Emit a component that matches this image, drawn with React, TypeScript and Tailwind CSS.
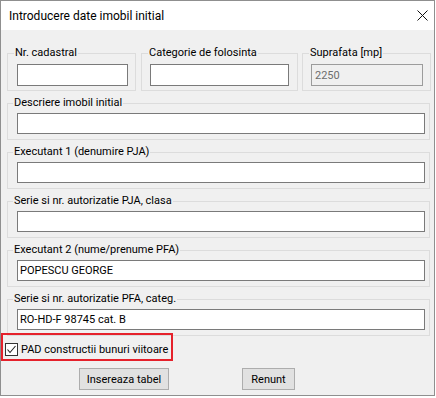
import React from 'react'

function Group({ label, className, legendClass, children }: { label: string; className?: string; legendClass?: string; children: React.ReactNode }) {
  return (
    <fieldset className={`border border-[#dcdcdc] min-w-0 ${className ?? ''}`}>
      <legend className={`px-[1px] leading-[14px] whitespace-nowrap ${legendClass ?? ''}`}>{label}</legend>
      {children}
    </fieldset>
  )
}

function TextBox({ value = '', disabled = false, h = 'h-[21px]' }: { value?: string; disabled?: boolean; h?: string }) {
  return (
    <div
      className={`${h} w-full border flex items-center leading-none ${
        disabled ? 'bg-[#f0f0f0] border-[#9c9c9c] text-[#6d6d6d] pl-[3px]' : 'bg-white border-[#7a7a7a] text-black pl-[2px]'
      }`}
    >
      {value}
    </div>
  )
}

export default function App() {
  const wide = [
    { label: 'Descriere imobil initial', value: '' },
    { label: 'Executant 1 (denumire PJA)', value: '' },
    { label: 'Serie si nr. autorizatie PJA, clasa', value: '' },
    { label: 'Executant 2 (nume/prenume PFA)', value: 'POPESCU GEORGE' },
    { label: 'Serie si nr. autorizatie PFA, categ.', value: 'RO-HD-F 98745 cat. B' },
  ]

  return (
    <div className="min-h-screen bg-white">
      <div className="w-[435px] h-[396px] border border-[#8f8f8f] bg-[#f0f0f0] flex flex-col text-[11px] text-black font-['Roboto',sans-serif]">
        {/* title bar */}
        <div className="h-[29px] bg-white flex items-center justify-between pl-[8px] pr-[6px] shrink-0">
          <span className="text-[12px]">Introducere date imobil initial</span>
          <svg width="11" height="11" viewBox="0 0 11 11">
            <path d="M0.5 0.5 L10.5 10.5 M10.5 0.5 L0.5 10.5" stroke="#111" strokeWidth="1" />
          </svg>
        </div>

        {/* body */}
        <div className="flex flex-col pt-[16px] pl-[6px] pr-[3px]">
          <div className="flex">
            <Group label="Nr. cadastral" legendClass="-ml-[3px]" className="w-[129px] pl-[9px] pr-[7px] pt-[4px] pb-[4px]">
              <TextBox h="h-[22px]" />
            </Group>
            <Group label="Categorie de folosinta" legendClass="-ml-[2px]" className="w-[157px] ml-[5px] px-[8px] pt-[4px] pb-[4px]">
              <TextBox h="h-[22px]" />
            </Group>
            <Group label="Suprafata [mp]" legendClass="-ml-[2px]" className="w-[129px] ml-[4px] pl-[8px] pr-[7px] pt-[4px] pb-[4px]">
              <TextBox h="h-[22px]" value="2250" disabled />
            </Group>
          </div>

          {wide.map(g => (
            <Group key={g.label} label={g.label} legendClass="-ml-[4px]" className="w-[423px] mt-[5px] pl-[9px] pr-[4px] pt-[3px] pb-[5px]">
              <TextBox value={g.value} />
            </Group>
          ))}

          {/* highlighted checkbox */}
          <div className="w-[172px] h-[28px] -ml-[6px] -mt-[3px] border-2 border-[#e5212b] flex items-center pl-[2px] pt-[4px]">
            <span className="w-[13px] h-[13px] border border-[#333] bg-white flex items-center justify-center shrink-0">
              <svg width="11" height="11" viewBox="0 0 11 11">
                <path d="M1.5 5.5 L4 8.5 L9.5 2" fill="none" stroke="#222" strokeWidth="1.1" />
              </svg>
            </span>
            <span className="ml-[3px] leading-none whitespace-nowrap">PAD constructii bunuri viitoare</span>
          </div>

          {/* buttons */}
          <div className="flex mt-[7px]">
            <button className="ml-[72px] w-[90px] h-[22px] bg-[#e1e1e1] border border-[#adadad] leading-none">
              Insereaza tabel
            </button>
            <button className="ml-[73px] w-[53px] h-[22px] bg-[#e1e1e1] border border-[#adadad] leading-none">
              Renunt
            </button>
          </div>
        </div>
      </div>
    </div>
  )
}
